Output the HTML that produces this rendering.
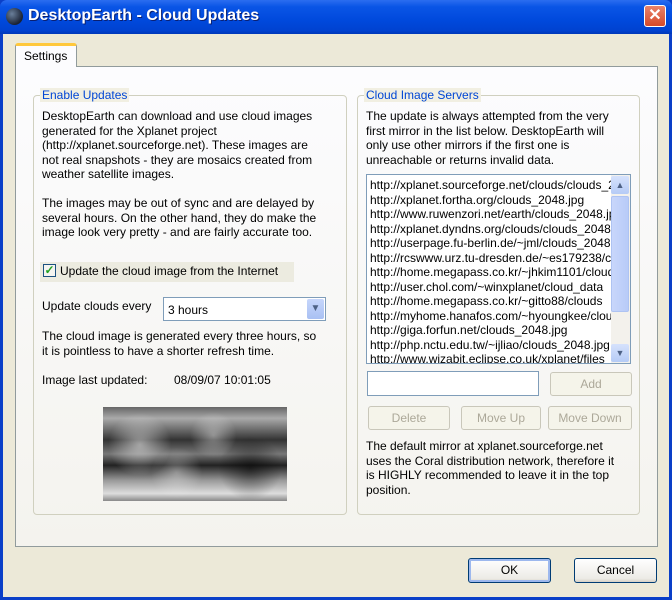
<!DOCTYPE html>
<html><head><style>
*{box-sizing:border-box;margin:0;padding:0}
body{width:672px;height:600px;overflow:hidden;background:#0a3fc8;font-family:"Liberation Sans",sans-serif;font-size:12px;color:#000;position:relative}
.a{position:absolute}
#title{left:0;top:0;width:672px;height:34px;background:linear-gradient(#2b6df0 0%,#0a55e6 20%,#0049dc 60%,#0042d0 90%,#0038b8 100%);border-radius:7px 7px 0 0}
#title .t{left:28px;top:7px;color:#fff;font-weight:bold;font-size:16px;text-shadow:1px 1px #0a1f70}
#client{left:3px;top:34px;width:666px;height:563px;background:#ece9d8}
.panel{left:15px;top:66px;width:643px;height:481px;background:linear-gradient(#fcfcfe,#f4f3ee);border:1px solid #919b9c}
.tab{left:15px;top:43px;width:62px;height:24px;background:#fcfcfe;border:1px solid #919b9c;border-bottom:none;border-top:3px solid #ffc83c;border-radius:3px 3px 0 0;padding:3px 0 0 8px}
.grp{border:1px solid #d0d0bf;border-radius:4px}
.leg{color:#0046d5;background:#f1efe2;padding:0 2px}
p{line-height:14.5px;white-space:nowrap}
.btn{border:1px solid #c9c7ba;border-radius:3px;background:#f5f4ea;color:#aca899;text-align:center;line-height:22px}
.b2{border:1px solid #003c74;border-radius:3px;background:linear-gradient(#fff,#ecebe6 85%,#d6d0c5);text-align:center;line-height:22px;color:#000}
.list{background:#fff;border:1px solid #7f9db9;overflow:hidden}
.list div{line-height:14.5px;white-space:nowrap;padding-left:3px}
</style></head><body>
<div id="title" class="a">
 <div class="a" style="left:6px;top:8px;width:17px;height:17px;border-radius:50%;background:radial-gradient(circle at 35% 35%,#6a7f9a,#1a2233 70%)"></div>
 <div class="a t">DesktopEarth - Cloud Updates</div>
 <div class="a" style="left:644px;top:5px;width:22px;height:22px;border:1px solid #fff;border-radius:3px;background:linear-gradient(#e8826a,#d64a2a);color:#fff;text-align:center;font-weight:bold;font-size:16px;line-height:20px">✕</div>
</div>
<div id="client" class="a"></div>
<div class="a panel"></div>
<div class="a tab">Settings</div>

<div class="a grp" style="left:33px;top:95px;width:314px;height:420px"></div>
<div class="a leg" style="left:40px;top:88px">Enable Updates</div>
<div class="a" style="left:42px;top:109px;width:300px"><p>DesktopEarth can download and use cloud images<br>generated for the Xplanet project<br>(http://xplanet.sourceforge.net). These images are<br>not real snapshots - they are mosaics created from<br>weather satellite images.</p><p style="margin-top:14.5px">The images may be out of sync and are delayed by<br>several hours. On the other hand, they do make the<br>image look very pretty - and are fairly accurate too.</p></div>
<div class="a" style="left:40px;top:262px;width:254px;height:20px;background:#ecebe0"></div>
<div class="a" style="left:43px;top:264px;width:13px;height:13px;border:1px solid #1c5180;background:#f4f4f0;color:#21a121;font-size:12px;line-height:11px;text-align:center;font-weight:bold">✓</div>
<div class="a" style="left:60px;top:264px">Update the cloud image from the Internet</div>
<div class="a" style="left:42px;top:299px">Update clouds every</div>
<div class="a" style="left:163px;top:297px;width:163px;height:24px;background:#fff;border:1px solid #7f9db9;padding:5px 4px">3 hours</div>
<div class="a" style="left:307px;top:299px;width:17px;height:20px;background:linear-gradient(#c6d6fb,#a9c0f3);border-radius:2px;color:#4d6185;text-align:center;font-size:10px;line-height:20px">▼</div>
<div class="a" style="left:42px;top:329px;width:300px"><p>The cloud image is generated every three hours, so<br>it is pointless to have a shorter refresh time.</p></div>
<div class="a" style="left:42px;top:373px">Image last updated:</div>
<div class="a" style="left:174px;top:373px">08/09/07 10:01:05</div>
<div class="a" style="left:103px;top:407px;width:184px;height:94px;background:linear-gradient(#666,#aaa 12%,#333 35%,#777 50%,#222 62%,#999 78%,#ddd 92%,#888)"></div>
<div class="a" style="left:103px;top:407px;width:184px;height:94px;background:radial-gradient(circle at 20% 40%,rgba(255,255,255,.5),transparent 20%),radial-gradient(circle at 60% 30%,rgba(255,255,255,.4),transparent 18%),radial-gradient(circle at 80% 65%,rgba(0,0,0,.5),transparent 20%),radial-gradient(circle at 40% 70%,rgba(255,255,255,.35),transparent 20%)"></div>

<div class="a grp" style="left:357px;top:95px;width:283px;height:420px"></div>
<div class="a leg" style="left:364px;top:88px">Cloud Image Servers</div>
<div class="a" style="left:366px;top:109px;width:272px"><p>The update is always attempted from the very<br>first mirror in the list below. DesktopEarth will<br>only use other mirrors if the first one is<br>unreachable or returns invalid data.</p></div>
<div class="a list" style="left:366px;top:174px;width:265px;height:190px;padding-top:3px">
<div>http://xplanet.sourceforge.net/clouds/clouds_2048.jpg</div>
<div>http://xplanet.fortha.org/clouds_2048.jpg</div>
<div>http://www.ruwenzori.net/earth/clouds_2048.jpg</div>
<div>http://xplanet.dyndns.org/clouds/clouds_2048.jpg</div>
<div>http://userpage.fu-berlin.de/~jml/clouds_2048.jpg</div>
<div>http://rcswww.urz.tu-dresden.de/~es179238/clouds</div>
<div>http://home.megapass.co.kr/~jhkim1101/clouds</div>
<div>http://user.chol.com/~winxplanet/cloud_data</div>
<div>http://home.megapass.co.kr/~gitto88/clouds</div>
<div>http://myhome.hanafos.com/~hyoungkee/clouds</div>
<div>http://giga.forfun.net/clouds_2048.jpg</div>
<div>http://php.nctu.edu.tw/~ijliao/clouds_2048.jpg</div>
<div>http://www.wizabit.eclipse.co.uk/xplanet/files</div>
</div>
<div class="a" style="left:611px;top:175px;width:19px;height:188px;background:#f3f1ec"></div>
<div class="a" style="left:611px;top:176px;width:18px;height:18px;background:linear-gradient(#d6e2fc,#b5cbf6);border-radius:2px;color:#4d6185;font-size:9px;text-align:center;line-height:18px">▲</div>
<div class="a" style="left:611px;top:196px;width:18px;height:116px;background:linear-gradient(90deg,#c8d6fb,#b8cbf8);border:1px solid #aec3f2;border-radius:2px"></div>
<div class="a" style="left:611px;top:344px;width:18px;height:18px;background:linear-gradient(#d6e2fc,#b5cbf6);border-radius:2px;color:#4d6185;font-size:9px;text-align:center;line-height:18px">▼</div>
<div class="a" style="left:367px;top:371px;width:172px;height:25px;background:#fff;border:1px solid #7f9db9"></div>
<div class="a btn" style="left:550px;top:372px;width:82px;height:24px">Add</div>
<div class="a btn" style="left:368px;top:406px;width:82px;height:24px">Delete</div>
<div class="a btn" style="left:461px;top:406px;width:80px;height:24px">Move Up</div>
<div class="a btn" style="left:548px;top:406px;width:84px;height:24px">Move Down</div>
<div class="a" style="left:366px;top:439px;width:272px"><p>The default mirror at xplanet.sourceforge.net<br>uses the Coral distribution network, therefore it<br>is HIGHLY recommended to leave it in the top<br>position.</p></div>

<div class="a b2" style="left:468px;top:558px;width:83px;height:25px;box-shadow:inset 0 0 0 2px #9db8ee">OK</div>
<div class="a b2" style="left:574px;top:558px;width:83px;height:25px">Cancel</div>
</body></html>
